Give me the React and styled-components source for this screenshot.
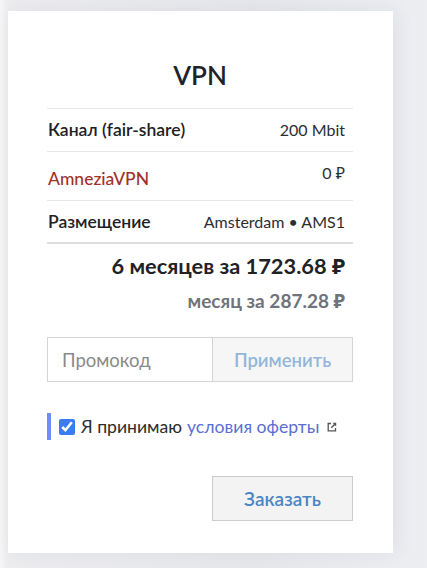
import React from "react";
import styled, { createGlobalStyle } from "styled-components";

const Global = createGlobalStyle`
  html, body { margin: 0; padding: 0; }
  body {
    font-family: Lato, "Noto Sans", "DejaVu Sans", sans-serif;
    background: linear-gradient(90deg, #f6f6f7 0px, #ececef 8px, #e6e7eb 60%, #eceef2 100%);
    min-height: 568px;
  }
`;

const Page = styled.div`
  padding: 11px 0 15px 8px;
`;

const Card = styled.div`
  width: 385px;
  height: 542px;
  box-sizing: border-box;
  background: #fff;
  padding: 48px 40px 0 39px;
  display: flex;
  flex-direction: column;
  box-shadow: 4px 0 18px rgba(40, 45, 70, 0.06);
`;

const Title = styled.h1`
  margin: 0 0 17px;
  font-size: 26px;
  line-height: 32px;
  font-weight: 600;
  text-align: center;
  color: #1f2329;
`;

const Table = styled.div`
  border-top: 1px solid #e6e6e6;
`;

const Row = styled.div`
  display: flex;
  justify-content: space-between;
  align-items: flex-start;
  padding: 11px 8px ${(p) => (p.$strong ? "10px" : "11px")} 1px;
  border-bottom: ${(p) => (p.$strong ? "2px solid #dedede" : "1px solid #e6e6e6")};
`;

const Label = styled.span`
  font-size: 17.5px;
  line-height: 20px;
  font-weight: ${(p) => (p.$link ? 500 : 600)};
  color: ${(p) => (p.$link ? "#a0322a" : "#1e2024")};
  padding-top: ${(p) => (p.$link ? "6px" : "0")};
`;

const Value = styled.span`
  font-size: 16px;
  line-height: 20px;
  color: #2b2d31;
`;

const Price = styled.div`
  margin-top: 9px;
  padding-right: 8px;
  text-align: right;
  font-size: 21.8px;
  line-height: 26px;
  font-weight: 700;
  color: #1f2226;
`;

const Monthly = styled.div`
  margin-top: 11px;
  padding-right: 8px;
  text-align: right;
  font-size: 19px;
  line-height: 22px;
  font-weight: 700;
  color: #6f737b;
`;

const Promo = styled.div`
  margin-top: 25px;
  display: flex;
  height: 45px;
  border: 1px solid #d4d4d4;
  box-sizing: border-box;
`;

const PromoInput = styled.input`
  width: 165px;
  box-sizing: border-box;
  border: none;
  border-right: 1px solid #d4d4d4;
  padding: 0 14px;
  font-family: inherit;
  font-size: 18.5px;
  color: #333;
  outline: none;
  &::placeholder { color: #8a8a8a; }
`;

const ApplyButton = styled.button`
  flex: 1;
  border: none;
  background: #f6f6f6;
  font-family: inherit;
  font-size: 18.5px;
  font-weight: 600;
  color: #93b6da;
  cursor: pointer;
`;

const Agree = styled.label`
  margin-top: 31px;
  display: flex;
  align-items: center;
  gap: 6px;
  height: 27px;
  border-left: 4px solid #6b8ffa;
  padding-left: 8px;
  font-size: 17.6px;
  color: #2a2c30;
`;

const Check = styled.input`
  margin: 0;
  width: 16px;
  height: 16px;
  accent-color: #3b7cf5;
`;

const Link = styled.a`
  color: #5a6ed2;
  text-decoration: none;
  margin-left: 5px;
`;

const ExtIcon = styled.svg`
  margin-left: 2px;
  width: 10px;
  height: 10px;
  flex: none;
`;

const Footer = styled.div`
  margin-top: 36px;
  display: flex;
  justify-content: flex-end;
`;

const OrderButton = styled.button`
  width: 141px;
  height: 45px;
  border: 1px solid #cccccc;
  background: #f3f3f3;
  font-family: inherit;
  font-size: 19px;
  font-weight: 600;
  color: #4a85c4;
  cursor: pointer;
`;

export default function App() {
  return (
    <>
      <Global />
      <Page>
        <Card>
          <Title>VPN</Title>
          <Table>
            <Row>
              <Label>Канал (fair-share)</Label>
              <Value>200 Mbit</Value>
            </Row>
            <Row>
              <Label $link>AmneziaVPN</Label>
              <Value>0 ₽</Value>
            </Row>
            <Row $strong>
              <Label>Размещение</Label>
              <Value>Amsterdam • AMS1</Value>
            </Row>
          </Table>
          <Price>6 месяцев за 1723.68 ₽</Price>
          <Monthly>месяц за 287.28 ₽</Monthly>
          <Promo>
            <PromoInput placeholder="Промокод" />
            <ApplyButton>Применить</ApplyButton>
          </Promo>
          <Agree>
            <Check type="checkbox" defaultChecked />
            <span>
              Я принимаю<Link href="#">условия оферты</Link>
            </span>
            <ExtIcon viewBox="0 0 10 10">
              <path d="M4 1.5H1.2v7.3h7.3V6" fill="none" stroke="#555" strokeWidth="1.3" />
              <path d="M5.5 0.8h3.7v3.7z" fill="#555" />
              <path d="M8.6 1.4L4.3 5.7" stroke="#555" strokeWidth="1.4" />
            </ExtIcon>
          </Agree>
          <Footer>
            <OrderButton>Заказать</OrderButton>
          </Footer>
        </Card>
      </Page>
    </>
  );
}
